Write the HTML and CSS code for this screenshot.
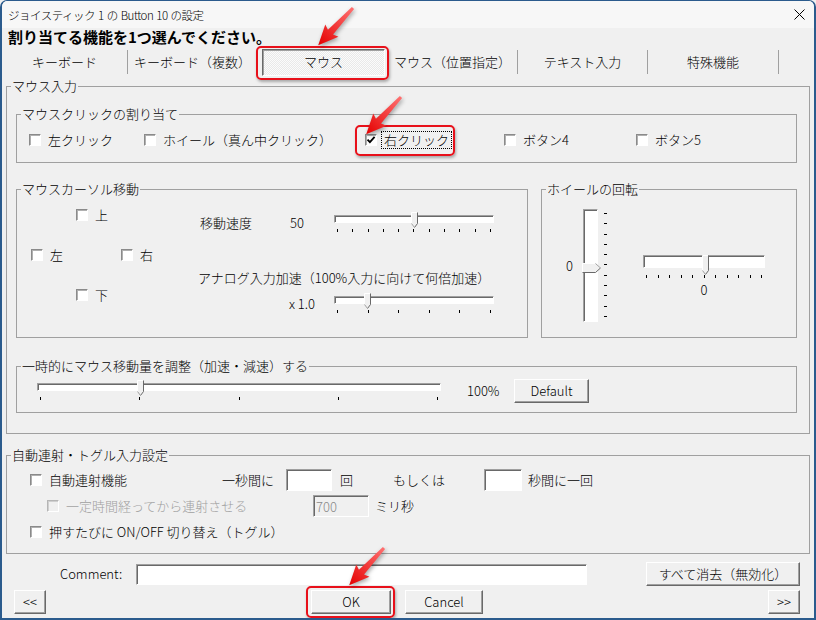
FILE: index.html
```html
<!DOCTYPE html>
<html lang="ja">
<head>
<meta charset="UTF-8">
<title>ジョイスティック 1 の Button 10 の設定</title>
<link rel="stylesheet" href="styles.css">
</head>
<body>
<div class="window">
  <div class="titlebar">
    <span class="title">ジョイスティック 1 の Button 10 の設定</span>
    <svg class="close" width="11" height="11" viewBox="0 0 11 11"><path d="M0.5 0.5L10.5 10.5M10.5 0.5L0.5 10.5" stroke="#000" stroke-width="1"/></svg>
  </div>
  <div class="heading">割り当てる機能を1つ選んでください。</div>

  <div class="tabs">
    <div class="tab first">キーボード</div>
    <div class="tab noline">キーボード（複数）</div>
    <div class="tab on"><span class="pressed">マウス</span></div>
    <div class="tab">マウス（位置指定）</div>
    <div class="tab">テキスト入力</div>
    <div class="tab last">特殊機能</div>
  </div>

  <fieldset class="group main">
    <legend>マウス入力</legend>

    <fieldset class="group clicks">
      <legend>マウスクリックの割り当て</legend>
      <div class="click-row">
        <label class="check"><span class="box"></span>左クリック</label>
        <label class="check"><span class="box"></span>ホイール（真ん中クリック）</label>
        <label class="check tight"><span class="box"><svg width="10" height="10" viewBox="0 0 10 10"><path d="M1.5 4.6L3.9 7.2L8.6 1.8" fill="none" stroke="#000" stroke-width="1.8"/></svg></span><span class="focus">右クリック</span></label>
        <label class="check"><span class="box"></span>ボタン4</label>
        <label class="check"><span class="box"></span>ボタン5</label>
      </div>
    </fieldset>

    <div class="mid">
      <fieldset class="group cursor">
        <legend>マウスカーソル移動</legend>
        <div class="cursor-body">
          <div class="dirs">
            <label class="check up"><span class="box"></span>上</label>
            <label class="check left"><span class="box"></span>左</label>
            <label class="check right"><span class="box"></span>右</label>
            <label class="check down"><span class="box"></span>下</label>
          </div>
          <div class="speed">
            <div class="srow">
              <span class="slabel">移動速度</span>
              <span class="sval">50</span>
              <div class="slider s160">
                <div class="track"></div>
                <div class="ticks"><i></i><i></i><i></i><i></i><i></i><i></i><i></i><i></i><i></i><i></i><i></i></div>
                <svg class="thumb" style="left:77px" width="7" height="16" viewBox="0 0 7 16"><path d="M0.5 0.5H6.5V11.5L3.5 15.5L0.5 11.5Z" fill="#f0f0f0"/><path d="M0.5 11.5V0.5H6" fill="none" stroke="#fff"/><path d="M6.5 0.5V11.5L3.5 15.5" fill="none" stroke="#696969"/><path d="M0.5 11.5L3.5 15.5" fill="none" stroke="#a0a0a0"/></svg>
              </div>
            </div>
            <div class="accel-label">アナログ入力加速（100%入力に向けて何倍加速）</div>
            <div class="srow second">
              <span class="sval2">x 1.0</span>
              <div class="slider s160">
                <div class="track"></div>
                <div class="ticks"><i></i><i></i><i></i><i></i><i></i><i></i></div>
                <svg class="thumb" style="left:30px" width="7" height="16" viewBox="0 0 7 16"><path d="M0.5 0.5H6.5V11.5L3.5 15.5L0.5 11.5Z" fill="#f0f0f0"/><path d="M0.5 11.5V0.5H6" fill="none" stroke="#fff"/><path d="M6.5 0.5V11.5L3.5 15.5" fill="none" stroke="#696969"/><path d="M0.5 11.5L3.5 15.5" fill="none" stroke="#a0a0a0"/></svg>
              </div>
            </div>
          </div>
        </div>
      </fieldset>

      <fieldset class="group wheel">
        <legend>ホイールの回転</legend>
        <div class="wheel-body">
          <div class="vgroup">
            <span class="vval">0</span>
            <div class="vslider">
              <div class="vtrack"></div>
              <div class="vticks"><i></i><i></i><i></i><i></i><i></i><i></i><i></i><i></i><i></i><i></i><i></i></div>
              <svg class="vthumb" style="top:54px" width="19" height="10" viewBox="0 0 19 10"><path d="M0.5 0.5H13.5L18.5 5L13.5 9.5H0.5Z" fill="#f0f0f0"/><path d="M0.5 9.5V0.5H13.5" fill="none" stroke="#fff"/><path d="M0.5 9.5H13.5L18.5 5" fill="none" stroke="#696969"/><path d="M13.5 0.5L18.5 5" fill="none" stroke="#a0a0a0"/></svg>
            </div>
          </div>
          <div class="hgroup">
            <div class="slider wide s122">
              <div class="track"></div>
              <div class="ticks"><i></i><i></i><i></i><i></i><i></i><i></i><i></i><i></i><i></i><i></i><i></i></div>
              <svg class="thumb" style="left:59px" width="7" height="20" viewBox="0 0 7 20"><path d="M0.5 0.5H6.5V15.5L3.5 19.5L0.5 15.5Z" fill="#f0f0f0"/><path d="M0.5 15.5V0.5H6" fill="none" stroke="#fff"/><path d="M6.5 0.5V15.5L3.5 19.5" fill="none" stroke="#696969"/><path d="M0.5 15.5L3.5 19.5" fill="none" stroke="#a0a0a0"/></svg>
            </div>
            <div class="hval">0</div>
          </div>
        </div>
      </fieldset>
    </div>

    <fieldset class="group temp">
      <legend>一時的にマウス移動量を調整（加速・減速）する</legend>
      <div class="temp-body">
        <div class="slider s404">
          <div class="track"></div>
          <div class="ticks"><i></i><i></i><i></i><i></i><i></i></div>
          <svg class="thumb" style="left:100px" width="7" height="16" viewBox="0 0 7 16"><path d="M0.5 0.5H6.5V11.5L3.5 15.5L0.5 11.5Z" fill="#f0f0f0"/><path d="M0.5 11.5V0.5H6" fill="none" stroke="#fff"/><path d="M6.5 0.5V11.5L3.5 15.5" fill="none" stroke="#696969"/><path d="M0.5 11.5L3.5 15.5" fill="none" stroke="#a0a0a0"/></svg>
        </div>
        <span class="pct">100%</span>
        <button class="btn default">Default</button>
      </div>
    </fieldset>
  </fieldset>

  <fieldset class="group auto">
    <legend>自動連射・トグル入力設定</legend>
    <div class="auto-body">
      <div class="arow first">
        <label class="check w192"><span class="box"></span>自動連射機能</label>
        <span class="w64">一秒間に</span>
        <input class="field f46" type="text">
        <span class="kai">回</span>
        <span class="w91">もしくは</span>
        <input class="field f38" type="text">
        <span class="after">秒間に一回</span>
      </div>
      <div class="arow indent">
        <label class="check off w266"><span class="box"></span>一定時間経ってから連射させる</label>
        <input class="field f56 dis" type="text" value="700" disabled>
        <span class="after">ミリ秒</span>
      </div>
      <div class="arow first">
        <label class="check"><span class="box"></span>押すたびに ON/OFF 切り替え（トグル）</label>
      </div>
    </div>
  </fieldset>

  <div class="comment">
    <label class="clabel">Comment:</label>
    <input class="field cfield" type="text">
    <button class="btn clear">すべて消去（無効化）</button>
  </div>

  <div class="actions">
    <button class="btn nav prev">&lt;&lt;</button>
    <button class="btn ok">OK</button>
    <button class="btn cancel">Cancel</button>
    <button class="btn nav next">&gt;&gt;</button>
  </div>

  <!-- red annotations -->
  <div class="mark m1"></div>
  <div class="mark m2"></div>
  <div class="mark m3"></div>
  <svg class="arrow a1" width="50" height="50" viewBox="0 0 50 50"><defs><linearGradient id="rg1" x1="0" y1="0" x2="1" y2="0"><stop offset="0" stop-color="#ff7070"/><stop offset="1" stop-color="#e40000"/></linearGradient></defs><g transform="translate(44 4) rotate(133)"><path d="M0 -1.5L33 -3.5L31 -9L51 0L31 9L33 3.5L0 1.5Z" fill="url(#rg1)"/></g></svg>
  <svg class="arrow a2" width="50" height="50" viewBox="0 0 50 50"><defs><linearGradient id="rg2" x1="0" y1="0" x2="1" y2="0"><stop offset="0" stop-color="#ff7070"/><stop offset="1" stop-color="#e40000"/></linearGradient></defs><g transform="translate(44 4) rotate(133)"><path d="M0 -1.5L33 -3.5L31 -9L51 0L31 9L33 3.5L0 1.5Z" fill="url(#rg2)"/></g></svg>
  <svg class="arrow a3" width="50" height="50" viewBox="0 0 50 50"><defs><linearGradient id="rg3" x1="0" y1="0" x2="1" y2="0"><stop offset="0" stop-color="#ff7070"/><stop offset="1" stop-color="#e40000"/></linearGradient></defs><g transform="translate(44 4) rotate(133)"><path d="M0 -1.5L33 -3.5L31 -9L51 0L31 9L33 3.5L0 1.5Z" fill="url(#rg3)"/></g></svg>
</div>
</body>
</html>
```

FILE: styles.css
```css
* {
  margin: 0;
  padding: 0;
  box-sizing: border-box;
}
body {
  font-family: "Noto Sans CJK JP", "Noto Sans", sans-serif;
  font-size: 13px;
  font-weight: 300;
  line-height: 16px;
  color: #000;
  background: #f0f0f0;
}
.window {
  position: relative;
  width: 816px;
  height: 620px;
  background: #f0f0f0;
  border: 2px solid #2b5b8d;
  border-top-width: 1px;
  border-radius: 7px 7px 0 0;
  overflow: hidden;
}
.titlebar {
  height: 27px;
  display: flex;
  align-items: center;
  justify-content: space-between;
  padding: 0 9px 0 6px;
  background: #f7f7f7;
  font-size: 11.5px;
}
.title { letter-spacing: -0.5px; word-spacing: 1px; }
.heading {
  padding-left: 6px;
  font-size: 15px;
  line-height: 18px;
  font-weight: bold;
}

/* tab strip */
.tabs {
  display: flex;
  align-items: center;
  height: 28px;
  margin-top: 2px;
}
.tab {
  width: 130px;
  height: 24px;
  display: flex;
  align-items: center;
  justify-content: center;
  border-right: 1px solid #a0a0a0;
  white-space: nowrap;
}
.tab.first { width: 126px; }
.tab.last { width: 131px; }
.tab.noline { border-right-color: transparent; }
.tab.on {
  height: 28px;
  border-right-color: transparent;
  justify-content: flex-start;
}
.pressed {
  width: 123px;
  height: 27px;
  margin-left: 4px;
  display: flex;
  align-items: center;
  justify-content: center;
  border: 1px solid;
  border-color: #696969 #fff #fff #696969;
  box-shadow: inset 1px 1px #a0a0a0;
  background: repeating-conic-gradient(#fbfbfb 0 25%, #e9e9e9 0 50%) 0 0 / 2px 2px;
}

/* group boxes */
.group {
  border: 1px solid #a0a0a0;
  padding: 0;
  margin: 0;
  min-width: 0;
}
.group > legend {
  margin-left: 4px;
  padding: 0 1px;
  line-height: 16px;
}
.main {
  margin: 2px 4px 0;
  padding: 0 12px 20px 0;
}
.main > .group,
.main > .mid {
  margin-left: 9px;
}
.clicks { margin-top: 12px; }
.click-row {
  display: grid;
  grid-template-columns: 115px 221px 139px 132px auto;
  align-items: center;
  height: 20px;
  margin: 8px 0 12px 12px;
}

/* checkbox */
.check {
  display: flex;
  align-items: center;
  gap: 7px;
  white-space: nowrap;
}
.check.tight { gap: 4px; }
.box {
  width: 12px;
  height: 12px;
  flex: none;
  background: #fff;
  border: 1px solid;
  border-color: #8a8a8a #fff #fff #8a8a8a;
  box-shadow: inset 1px 1px #b0b0b0;
  display: flex;
  align-items: center;
  justify-content: center;
}
.check.off { color: #a0a0a0; }
.check.off .box {
  background: #f0f0f0;
  border-color: #b5b5b5 #fff #fff #b5b5b5;
  box-shadow: inset 1px 1px #cfcfcf;
}
.focus {
  border: 1px dotted #000;
  padding: 0 2px;
}

.mid {
  display: flex;
  gap: 13px;
  margin-top: 18px;
}
.cursor { width: 512px; flex: none; }
.wheel { flex: 1; }
.cursor-body,
.wheel-body {
  height: 140px;
  display: flex;
  align-items: flex-start;
}
.dirs {
  display: grid;
  grid-template-columns: 45px 45px 77px;
  grid-template-rows: 20px 20px 20px;
  row-gap: 20px;
  margin: 8px 0 0 14px;
}
.up { grid-area: 1 / 2; }
.left { grid-area: 2 / 1; }
.right { grid-area: 2 / 3; }
.down { grid-area: 3 / 2; }
.speed { margin-top: 16px; }
.srow {
  display: flex;
  align-items: center;
  height: 20px;
}
.srow.second { margin-top: 8px; }
.slabel { width: 92px; padding-left: 2px; }
.sval { width: 44px; }
.sval2 { width: 136px; text-align: right; padding-right: 19px; }
.accel-label { margin-top: 37px; white-space: nowrap; }

/* trackbars */
.slider {
  position: relative;
  height: 20px;
  flex: none;
}
.slider.wide { height: auto; }
.s160 { width: 160px; }
.s122 { width: 122px; }
.s404 { width: 404px; }
.track {
  height: 8px;
  margin-top: 2px;
  background: #fff;
  border: 1px solid;
  border-color: #a0a0a0 #fff #fff #a0a0a0;
  box-shadow: inset 1px 1px #696969;
}
.wide .track { height: 13px; }
.ticks {
  display: flex;
  justify-content: space-between;
  padding: 0 3px;
  margin-top: 6px;
}
.wide .ticks { margin-top: 7px; }
.ticks i {
  width: 1px;
  height: 3px;
  background: #000;
}
.thumb {
  position: absolute;
  top: -1px;
}
.wide .thumb { top: 0; }

.vgroup {
  display: flex;
  align-items: center;
  height: 113px;
  margin: 12px 0 0 24px;
}
.vval { width: 17px; }
.vslider {
  position: relative;
  display: flex;
  height: 113px;
}
.vtrack {
  width: 15px;
  height: 113px;
  background: #fff;
  border: 1px solid;
  border-color: #a0a0a0 #fff #fff #a0a0a0;
  box-shadow: inset 1px 1px #696969;
}
.vticks {
  display: flex;
  flex-direction: column;
  justify-content: space-between;
  padding: 4px 0 5px;
  margin-left: 6px;
}
.vticks i {
  width: 3px;
  height: 1px;
  background: #000;
}
.vthumb {
  position: absolute;
  left: -1px;
}
.hgroup { margin: 56px 0 0 36px; }
.hval { text-align: center; margin-top: 4px; }

.temp { margin-top: 20px; }
.temp-body {
  display: flex;
  align-items: center;
  height: 24px;
  margin: 5px 0 9px 20px;
}
.pct { margin-left: 26px; width: 47px; }

/* buttons and edits */
.btn {
  font: inherit;
  color: #000;
  background: #f0f0f0;
  border: 1px solid;
  border-color: #fff #696969 #696969 #fff;
  box-shadow: inset -1px -1px #a0a0a0;
  display: flex;
  align-items: center;
  justify-content: center;
  height: 24px;
}
.default { width: 75px; }
.field {
  font: inherit;
  color: #000;
  height: 22px;
  padding: 0 2px;
  background: #fff;
  border: 1px solid;
  border-color: #a0a0a0 #fff #fff #a0a0a0;
  box-shadow: inset 1px 1px #696969;
  outline: none;
}
.field.dis {
  color: #8a8a8a;
  background: #f0f0f0;
}

.auto { margin: 13px 4px 0; }
.auto-body { padding: 4px 0 8px; }
.arow {
  display: flex;
  align-items: center;
  height: 26px;
}
.arow.first { padding-left: 23px; }
.arow.indent { padding-left: 40px; }
.w192 { width: 192px; }
.w266 { width: 266px; }
.w64 { width: 64px; }
.w91 { width: 91px; }
.f46 { width: 46px; }
.f38 { width: 38px; }
.f56 { width: 56px; }
.kai { margin-left: 8px; width: 53px; }
.after { margin-left: 6px; }

.comment {
  display: flex;
  align-items: center;
  height: 24px;
  margin-top: 8px;
  padding-left: 58px;
}
.clabel { width: 76px; }
.cfield { width: 451px; height: 21px; }
.clear { margin-left: 59px; width: 154px; }

.actions {
  display: flex;
  margin-top: 4px;
}
.nav { width: 32px; }
.prev { margin-left: 12px; }
.ok { width: 80px; margin-left: 265px; }
.cancel { width: 78px; margin-left: 14px; }
.next { margin-left: auto; margin-right: 14px; }

/* red annotations drawn over the dialog */
.mark {
  position: absolute;
  border: 2px solid #e8101a;
  border-radius: 5px;
  box-shadow: 1px 2px 3px rgba(0, 0, 0, 0.3);
}
.m1 { left: 254px; top: 45px; width: 133px; height: 34px; }
.m2 { left: 353px; top: 124px; width: 100px; height: 31px; }
.m3 { left: 304px; top: 585px; width: 89px; height: 32px; }
.arrow {
  position: absolute;
  filter: drop-shadow(1px 2px 2px rgba(0, 0, 0, 0.35));
}
.a1 { left: 307px; top: 3px; }
.a2 { left: 355px; top: 92px; }
.a3 { left: 338px; top: 543px; }
```
